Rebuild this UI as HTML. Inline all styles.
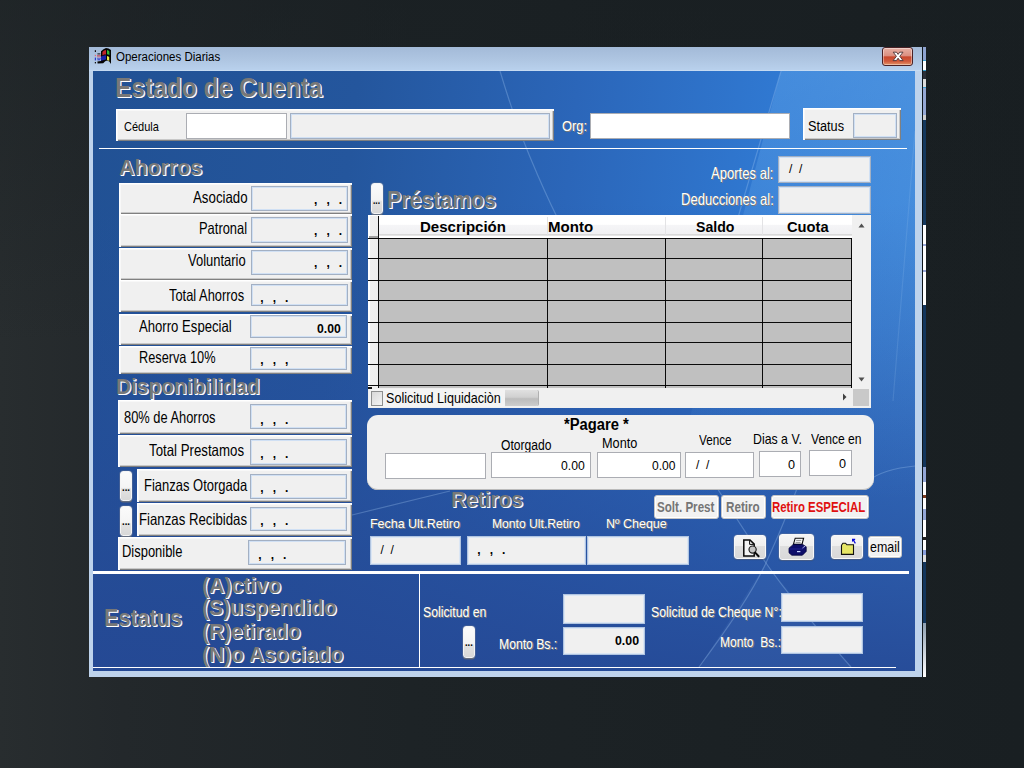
<!DOCTYPE html>
<html lang="es"><head><meta charset="utf-8"><title>Operaciones Diarias</title>
<style>
html,body{margin:0;padding:0}
body{width:1024px;height:768px;overflow:hidden;position:relative;font-family:"Liberation Sans",sans-serif;
 background:#1b2124;
 background-image:linear-gradient(180deg,rgba(24,30,33,.5) 0,rgba(24,30,33,0) 45%,rgba(30,36,38,.0) 100%),linear-gradient(90deg,#282d2f 0,#23282b 12%,#1d2326 40%,#191f22 100%);}
div,span,svg{position:absolute;box-sizing:border-box}
.win{background:#bed3ec;}
.tbar{background:linear-gradient(#a3bad8 0%,#aec5e1 50%,#b8d0ec 94%,#cde0f4 100%);}
.app{background:#2a5dab;overflow:hidden;
 background-image:linear-gradient(180deg,rgba(39,80,160,0) 0%,rgba(39,80,160,0) 22%,rgba(38,76,154,.5) 60%,rgba(37,72,148,.92) 100%),
 linear-gradient(96deg,#215194 0%,#24569d 30%,#2b66b9 55%,#3079d2 78%,#3c85d8 100%);}
.t{white-space:pre;color:#000;display:inline-block}
.c{white-space:pre;color:#000;font-weight:bold}
.pnl{background:#f0f0f0;box-shadow:inset 1px 1px 0 #fff,inset 2px 2px 0 #f8f8f8,inset -1px -1px 0 #808080,inset -2px -2px 0 #c8c8c8}
.fld{background:#f0f0f0;border:1px solid #a3b0c3;box-shadow:inset 0 0 0 1px #d0e0f4}
.fld2{background:#f0f0f0;border:1px solid #b0c4e0;box-shadow:inset 0 0 0 1px #dbe6f4}
.inp{background:#fff;border:1px solid #abadb3}
.hd{color:#787878;font-weight:bold;text-shadow:1px 1px 0 #fff,1.4px 1.4px 0 rgba(255,255,255,.6)}
.wl{color:#fff;text-shadow:1px 1px 0 #7a7a7a,1px 0 0 #7a7a7a}
.hl{background:#fff}
.btn{background:linear-gradient(#fbfbfb 0%,#f4f4f4 55%,#e2e2e2 60%,#d8d8d8 100%);border:1px solid #f4f4f4;border-radius:3px;box-shadow:0 0 0 .6px rgba(120,130,150,.6),0 1.5px 0 rgba(110,110,110,.75)}
.cmd{background:#f2f2f2;border:1px solid #c6c6c6;border-radius:3px;box-shadow:inset 0 0 0 1px #fff}
.dis{color:#757575;font-weight:bold}
.red{color:#e01010;font-weight:bold}
.b{font-weight:bold}
.ibtn{background:linear-gradient(#f5f5f5 0%,#efefef 44%,#dfdfdf 46%,#d9d9d9 100%);border:1px solid #f8f8f8;border-radius:3px;box-shadow:0 0 0 .6px rgba(120,130,150,.55),0 1px 1px rgba(60,70,90,.5)}

</style></head>
<body>
<div class="win" style="left:89px;top:47px;width:834px;height:630px;"></div>
<div class="tbar" style="left:89px;top:47px;width:834px;height:24px;"></div>
<div class="" style="left:922px;top:47px;width:1px;height:630px;background:#10161a"></div>
<div class="" style="left:923px;top:47px;width:3px;height:630px;background:linear-gradient(180deg,#8ea3d0 0.0px,#8ea3d0 12.8px,#3aa0d0 12.8px,#3aa0d0 13.8px,#ffffff 13.8px,#ffffff 23.2px,#3aa0d0 23.2px,#3aa0d0 24.2px,#2a2f38 24.2px,#2a2f38 31.5px,#dcdcdc 31.5px,#dcdcdc 39.9px,#3aa0d0 39.9px,#3aa0d0 41.0px,#95a8d4 41.0px,#95a8d4 68.0px,#cfcfcf 68.0px,#cfcfcf 73.2px,#14385e 73.2px,#14385e 178.0px,#ffffff 178.0px,#ffffff 197.0px,#9aa8d8 197.0px,#9aa8d8 199.0px,#ffffff 199.0px,#ffffff 223.0px,#9aa8d8 223.0px,#9aa8d8 225.0px,#ffffff 225.0px,#ffffff 258.2px,#12355c 258.2px,#12355c 420.3px,#93a6d6 420.3px,#93a6d6 434.9px,#ffffff 434.9px,#ffffff 448.5px,#7a3a20 448.5px,#7a3a20 451.0px,#ffffff 451.0px,#ffffff 462.0px,#93a6d6 462.0px,#93a6d6 473.0px,#ffffff 473.0px,#ffffff 490.0px,#202020 490.0px,#202020 493.0px,#ffffff 493.0px,#ffffff 503.0px,#8aa0dc 503.0px,#8aa0dc 508.0px,#e0e0e0 508.0px,#e0e0e0 515.0px,#12355c 515.0px,#12355c 576.0px,#8fa0b2 576px,#ffffff 630px)"></div>
<div class="app" style="left:93px;top:71px;width:822px;height:600px"><svg width="822" height="600" viewBox="0 0 822 600" style="left:0;top:0"><defs><linearGradient id="wg" x1="0" y1="0" x2="0" y2="1"><stop offset="0" stop-color="#62a6ea" stop-opacity=".42"/><stop offset=".45" stop-color="#62a6ea" stop-opacity=".22"/><stop offset="1" stop-color="#62a6ea" stop-opacity="0"/></linearGradient></defs><path d="M688 0 L822 0 L822 430 L575 430 Z" fill="url(#wg)"/><path d="M673 492 Q640 545 606 596 L758 596 Q715 545 673 492Z" fill="#6ea0e0" fill-opacity=".10"/><g fill="none" stroke="#a8ccf4" stroke-opacity=".3" stroke-width="1.2"><path d="M688 0 L600 300"/><path d="M407 0 Q422 50 437 86 T464 146"/><path d="M180 458 Q230 452 259 444 L357 420"/><path d="M706 412 L702.7 421 Q690 455 673 492 T606 596"/><path d="M621 412 L626.6 421 Q650 458 673 492 T758 596"/><path d="M822 395 Q790 398 775 410"/><path d="M822 60 Q812 180 800 330" stroke-opacity=".16"/></g></svg></div>
<svg style="left:94px;top:48px" width="17" height="16" viewBox="0 0 17 16"><path d="M7 3.2 L9.5 1.2 L12 0 L14.5 .6 L17 2 V16 L15.3 13.6 L13.2 12.6 L11.2 13.2 L9.2 15.2 L3.6 15.6 L3.4 13.6 L7 13 Z" fill="#050505"/><path d="M8.4 4 L10 2.6 L12 2 L12 6.4 L10 6.6 L8.4 7.4Z" fill="#c4232a"/><path d="M13 2 L14.4 2.6 L15.4 3.4 L15.4 7.2 L14.4 6.4 L13 6.2Z" fill="#2fb43a"/><path d="M7 8.4 L8.6 8 L10 7.4 L12 7.2 L12 11.6 L10 12 L8 12.6 L7 12.8Z" fill="#1a22a8"/><path d="M13 8 L14.4 8.4 L15.2 9 L15.2 13.2 L14.4 12.4 L13 12Z" fill="#ece84a"/><rect x=".8" y="2.2" width="1.2" height="1.8" fill="#111"/><rect x=".8" y="6.8" width="1.2" height="1.4" fill="#e06a78"/><rect x=".8" y="9.6" width="1.2" height="2.8" fill="#2a3ad0"/><rect x=".8" y="14" width="1.2" height="1.4" fill="#111"/><rect x="3.4" y="5.4" width="3" height="1" fill="#111"/><path d="M3.4 7.5h1.2M5.4 7.5h1.2M3.4 8.8h1.2M5.4 8.8h1.2" stroke="#d02a3a" stroke-width="1"/><path d="M3.4 10.4h1.2M5.4 10.4h1.2M3.4 11.8h3" stroke="#2030c8" stroke-width="1"/></svg>
<span class="t " style="left:116.00px;transform-origin:0 0;top:51.12px;font-size:12.5px;line-height:12.5px;transform:scaleX(0.9204)">Operaciones Diarias</span>
<div style="left:882px;top:47px;width:31px;height:19px;border:1px solid #4a2226;border-radius:3px;background:linear-gradient(#e7b0a4 0%,#dc8f80 46%,#c9482e 52%,#d05a3c 78%,#e39468 100%);box-shadow:inset 0 0 0 1px rgba(255,255,255,.4)"><svg width="30" height="17" viewBox="0 0 30 17" style="left:-.5px;top:0"><path d="M10.2 4.2h3.3l1.6 2.2 1.6-2.2h3.3l-3.2 4.1 3.3 4.3h-3.3l-1.7-2.4-1.7 2.4h-3.3l3.3-4.3z" fill="#fff" stroke="#4a3236" stroke-width=".9"/></svg></div>
<span class="t hd" style="left:114.92px;transform-origin:0 0;top:73.80px;font-size:28px;line-height:28px;transform:scaleX(0.8762)">Estado de Cuenta</span>
<div class="pnl" style="left:116px;top:109px;width:438px;height:32px;"></div>
<span class="t " style="left:124.00px;transform-origin:0 0;top:120.30px;font-size:13px;line-height:13px;transform:scaleX(0.8459)">Cédula</span>
<div class="inp" style="left:186px;top:113px;width:101px;height:26px;"></div>
<div class="fld" style="left:290px;top:113px;width:260px;height:26px;"></div>
<span class="t wl" style="left:562.00px;transform-origin:0 0;top:118.30px;font-size:15px;line-height:15px;transform:scaleX(0.8570)">Org:</span>
<div class="inp" style="left:590px;top:113px;width:200px;height:26px;"></div>
<div class="pnl" style="left:802.5px;top:108px;width:98.5px;height:32px;"></div>
<span class="t " style="left:808.00px;transform-origin:0 0;top:119.15px;font-size:14px;line-height:14px;transform:scaleX(0.9070)">Status</span>
<div class="fld" style="left:853px;top:112.5px;width:44px;height:25.0px;"></div>
<div class="hl" style="left:99px;top:148px;width:808px;height:1px;"></div>
<span class="t hd" style="left:119.30px;transform-origin:0 0;top:157.25px;font-size:22.5px;line-height:22.5px;transform:scaleX(0.9507)">Ahorros</span>
<div class="pnl" style="left:119px;top:183px;width:233px;height:31px;"></div>
<span class="t " style="left:193.00px;transform-origin:0 0;top:189.33px;font-size:16.5px;line-height:16.5px;transform:scaleX(0.8050)">Asociado</span>
<div class="fld" style="left:251px;top:186px;width:97px;height:25px;"></div>
<span class="c" style="left:314.08px;top:194.34px;font-size:12px;line-height:12px;word-spacing:5.73px">, , .</span>
<div class="pnl" style="left:119px;top:214px;width:233px;height:33px;"></div>
<span class="t " style="left:198.72px;transform-origin:0 0;top:219.83px;font-size:16.5px;line-height:16.5px;transform:scaleX(0.7827)">Patronal</span>
<div class="fld" style="left:251px;top:217px;width:97px;height:26px;"></div>
<span class="c" style="left:314.08px;top:224.84px;font-size:12px;line-height:12px;word-spacing:5.73px">, , .</span>
<div class="pnl" style="left:119px;top:248px;width:233px;height:32px;"></div>
<span class="t " style="left:188.00px;transform-origin:0 0;top:252.03px;font-size:16.5px;line-height:16.5px;transform:scaleX(0.7854)">Voluntario</span>
<div class="fld" style="left:251px;top:250px;width:97px;height:25px;"></div>
<span class="c" style="left:314.08px;top:257.04px;font-size:12px;line-height:12px;word-spacing:5.73px">, , .</span>
<div class="pnl" style="left:119px;top:280px;width:233px;height:32px;"></div>
<span class="t " style="left:168.80px;transform-origin:0 0;top:286.83px;font-size:16.5px;line-height:16.5px;transform:scaleX(0.7807)">Total Ahorros</span>
<div class="fld" style="left:251px;top:284px;width:97px;height:22px;"></div>
<span class="c" style="left:260.28px;top:291.84px;font-size:12px;line-height:12px;word-spacing:5.73px">, , .</span>
<div class="pnl" style="left:119px;top:314px;width:233px;height:31px;"></div>
<span class="t " style="left:138.80px;transform-origin:0 0;top:318.03px;font-size:16.5px;line-height:16.5px;transform:scaleX(0.7961)">Ahorro Especial</span>
<div class="fld" style="left:250px;top:315px;width:97px;height:23px;"></div>
<span class="t b" style="left:317.00px;transform-origin:0 0;top:321.50px;font-size:13px;line-height:13px;transform:scaleX(0.9373)">0.00</span>
<div class="pnl" style="left:119px;top:346px;width:233px;height:28px;"></div>
<span class="t " style="left:138.73px;transform-origin:0 0;top:348.53px;font-size:16.5px;line-height:16.5px;transform:scaleX(0.7725)">Reserva 10%</span>
<div class="fld" style="left:250px;top:347px;width:97px;height:23px;"></div>
<span class="c" style="left:260.28px;top:353.84px;font-size:12px;line-height:12px;word-spacing:5.73px">, , ,</span>
<span class="t hd" style="left:116.08px;transform-origin:0 0;top:374.58px;font-size:22.7px;line-height:22.7px;transform:scaleX(0.9195)">Disponibilidad</span>
<div class="pnl" style="left:118px;top:400px;width:234px;height:34px;"></div>
<span class="t " style="left:124.00px;transform-origin:0 0;top:408.53px;font-size:16.5px;line-height:16.5px;transform:scaleX(0.7792)">80% de Ahorros</span>
<div class="fld" style="left:250px;top:404px;width:97px;height:25px;"></div>
<span class="c" style="left:260.28px;top:413.84px;font-size:12px;line-height:12px;word-spacing:5.73px">, , .</span>
<div class="pnl" style="left:118px;top:435px;width:234px;height:32px;"></div>
<span class="t " style="left:149.00px;transform-origin:0 0;top:442.03px;font-size:16.5px;line-height:16.5px;transform:scaleX(0.8031)">Total Prestamos</span>
<div class="fld" style="left:250px;top:439px;width:97px;height:26px;"></div>
<span class="c" style="left:260.28px;top:447.84px;font-size:12px;line-height:12px;word-spacing:5.73px">, , .</span>
<div class="pnl" style="left:137px;top:469px;width:215px;height:33px;"></div>
<div class="btn" style="left:119.5px;top:470.5px;width:12.5px;height:30.5px;"></div>
<span class="t b" style="left:121.50px;transform-origin:0 0;top:482.19px;font-size:11px;line-height:11px;transform:scaleX(0.8779)">...</span>
<span class="t " style="left:143.71px;transform-origin:0 0;top:477.03px;font-size:16.5px;line-height:16.5px;transform:scaleX(0.7864)">Fianzas Otorgada</span>
<div class="fld" style="left:250px;top:474px;width:97px;height:25px;"></div>
<span class="c" style="left:260.28px;top:482.34px;font-size:12px;line-height:12px;word-spacing:5.73px">, , .</span>
<div class="pnl" style="left:137px;top:503px;width:215px;height:33px;"></div>
<div class="btn" style="left:119.5px;top:505.5px;width:12.5px;height:30px;"></div>
<span class="t b" style="left:121.50px;transform-origin:0 0;top:516.19px;font-size:11px;line-height:11px;transform:scaleX(0.8779)">...</span>
<span class="t " style="left:139.20px;transform-origin:0 0;top:510.53px;font-size:16.5px;line-height:16.5px;transform:scaleX(0.8011)">Fianzas Recibidas</span>
<div class="fld" style="left:250px;top:507px;width:97px;height:24px;"></div>
<span class="c" style="left:260.28px;top:515.34px;font-size:12px;line-height:12px;word-spacing:5.73px">, , .</span>
<div class="pnl" style="left:118px;top:537px;width:234px;height:33px;"></div>
<span class="t " style="left:122.22px;transform-origin:0 0;top:543.03px;font-size:16.5px;line-height:16.5px;transform:scaleX(0.7842)">Disponible</span>
<div class="fld" style="left:248px;top:540px;width:98px;height:25px;"></div>
<span class="c" style="left:258.28px;top:548.84px;font-size:12px;line-height:12px;word-spacing:5.73px">, , .</span>
<span class="t wl" style="left:711.00px;transform-origin:0 0;top:164.53px;font-size:16.5px;line-height:16.5px;transform:scaleX(0.7919)">Aportes al:</span>
<div class="fld" style="left:778px;top:156px;width:93px;height:27px;"></div>
<span class="t " style="left:789.00px;transform-origin:0 0;top:163.34px;font-size:12px;line-height:12px;transform:scaleX(1.0000)">/  /</span>
<span class="t wl" style="left:680.71px;transform-origin:0 0;top:191.03px;font-size:16.5px;line-height:16.5px;transform:scaleX(0.7900)">Deducciones al:</span>
<div class="fld" style="left:778px;top:186px;width:93px;height:28px;"></div>
<div class="btn" style="left:370.5px;top:183px;width:12px;height:31px;"></div>
<span class="t b" style="left:372.50px;transform-origin:0 0;top:195.19px;font-size:11px;line-height:11px;transform:scaleX(0.7682)">...</span>
<span class="t hd" style="left:386.70px;transform-origin:0 0;top:189.44px;font-size:23.7px;line-height:23.7px;transform:scaleX(0.8995)">Préstamos</span>
<div style="left:368px;top:215px;width:503px;height:193px;background:#f0f0f0"><div style="left:0px;top:0px;width:484px;height:1px;background:#fff;"></div><div style="left:11px;top:1px;width:473px;height:22px;background:linear-gradient(#fff 0%,#fff 38%,#f5f5f7 42%,#f0f0f2 82%,#d9d9d9 84%,#d9d9d9 88%,#fff 90%,#fff 100%);"></div><div style="left:0px;top:1px;width:11px;height:172px;background:linear-gradient(90deg,#fff 0,#fff 1.5px,#f0f0f0 2px,#eee 100%);"></div><div style="left:1px;top:20.5px;width:9px;height:2px;background:#a0a0a0;"></div><div style="left:11px;top:24px;width:473px;height:149px;background:#c0c0c0;"></div><div style="left:0px;top:23px;width:484px;height:1px;background:#000;opacity:.95"></div><div style="left:0px;top:43px;width:484px;height:1px;background:#000;opacity:.95"></div><div style="left:0px;top:65px;width:484px;height:1px;background:#000;opacity:.95"></div><div style="left:0px;top:85px;width:484px;height:1px;background:#000;opacity:.95"></div><div style="left:0px;top:107px;width:484px;height:1px;background:#000;opacity:.95"></div><div style="left:0px;top:127px;width:484px;height:1px;background:#000;opacity:.95"></div><div style="left:0px;top:149px;width:484px;height:1px;background:#000;opacity:.95"></div><div style="left:0px;top:170px;width:484px;height:1px;background:#000;opacity:.95"></div><div style="left:10px;top:1px;width:1px;height:172px;background:#000;opacity:.95"></div><div style="left:179px;top:23px;width:1px;height:150px;background:#000;opacity:.95"></div><div style="left:297px;top:23px;width:1px;height:150px;background:#000;opacity:.95"></div><div style="left:394px;top:23px;width:1px;height:150px;background:#000;opacity:.95"></div><div style="left:483px;top:23px;width:1px;height:150px;background:#000;opacity:.95"></div><div style="left:179px;top:2px;width:1px;height:19px;background:#e3e3e5;"></div><div style="left:297px;top:2px;width:1px;height:19px;background:#e3e3e5;"></div><div style="left:394px;top:2px;width:1px;height:19px;background:#e3e3e5;"></div><div style="left:0px;top:172px;width:4px;height:2px;background:#111;"></div><svg style="left:490px;top:8px" width="7" height="5" viewBox="0 0 7 5"><path d="M3.5 .5L6.5 4.5H.5z" fill="#505050"/></svg><svg style="left:490px;top:162px" width="7" height="5" viewBox="0 0 7 5"><path d="M.5 .5h6L3.5 4.5z" fill="#505050"/></svg><svg style="left:474px;top:178px" width="5" height="8" viewBox="0 0 5 8"><path d="M1 .5L4.5 4L1 7.5z" fill="#404040"/></svg><div style="left:485px;top:174px;width:15.5px;height:17px;background:#c9c9c9;"></div><div style="left:136.5px;top:175px;width:33px;height:16px;background:linear-gradient(#e0e0e0 0%,#d0d0d0 45%,#bcbcbc 55%,#cdcdcd 100%);border-radius:0 2px 2px 0;box-shadow:1px 0 0 #b0b0b0"></div><div style="left:1px;top:174px;width:136px;height:18px;background:#f4f4f4;"></div><div style="left:2.5px;top:176px;width:12px;height:15px;background:linear-gradient(135deg,#d8d8d8,#f4f4f4);border:1px solid #8e8f8f"></div></div>
<span class="t b" style="left:420.03px;transform-origin:0 0;top:218.88px;font-size:15.5px;line-height:15.5px;transform:scaleX(0.9684)">Descripción</span>
<span class="t b" style="left:547.83px;transform-origin:0 0;top:218.88px;font-size:15.5px;line-height:15.5px;transform:scaleX(0.9709)">Monto</span>
<span class="t b" style="left:695.50px;transform-origin:0 0;top:218.88px;font-size:15.5px;line-height:15.5px;transform:scaleX(0.9105)">Saldo</span>
<span class="t b" style="left:786.50px;transform-origin:0 0;top:218.88px;font-size:15.5px;line-height:15.5px;transform:scaleX(0.9483)">Cuota</span>
<span class="t " style="left:386.00px;transform-origin:0 0;top:389.80px;font-size:15px;line-height:15px;transform:scaleX(0.8393)">Solicitud Liquidaciòn</span>
<div class="" style="left:367px;top:414.5px;width:507px;height:75.5px;background:#f0f0f0;border-radius:11px;box-shadow:inset 0 -1px 0 #bbb"></div>
<span class="t b" style="left:563.50px;transform-origin:0 0;top:416.96px;font-size:16px;line-height:16px;transform:scaleX(0.9220)">*Pagare *</span>
<span class="t " style="left:500.50px;transform-origin:0 0;top:436.88px;font-size:15.5px;line-height:15.5px;transform:scaleX(0.7812)">Otorgado</span>
<span class="t " style="left:602.18px;transform-origin:0 0;top:435.38px;font-size:15.5px;line-height:15.5px;transform:scaleX(0.8201)">Monto</span>
<span class="t " style="left:699.00px;transform-origin:0 0;top:433.03px;font-size:14.5px;line-height:14.5px;transform:scaleX(0.8075)">Vence</span>
<span class="t " style="left:753.45px;transform-origin:0 0;top:431.53px;font-size:14.5px;line-height:14.5px;transform:scaleX(0.8509)">Dias a V.</span>
<span class="t " style="left:811.00px;transform-origin:0 0;top:431.53px;font-size:14.5px;line-height:14.5px;transform:scaleX(0.8360)">Vence en</span>
<div class="inp" style="left:385px;top:453px;width:101px;height:26px;"></div>
<div class="inp" style="left:491px;top:452px;width:100px;height:26px;"></div>
<span class="t " style="left:561.00px;transform-origin:0 0;top:459.00px;font-size:13px;line-height:13px;transform:scaleX(0.9373)">0.00</span>
<div class="inp" style="left:597px;top:452px;width:84px;height:26px;"></div>
<span class="t " style="left:651.50px;transform-origin:0 0;top:459.00px;font-size:13px;line-height:13px;transform:scaleX(0.9293)">0.00</span>
<div class="inp" style="left:685px;top:452px;width:69px;height:26px;"></div>
<span class="t " style="left:696.00px;transform-origin:0 0;top:459.34px;font-size:12px;line-height:12px;transform:scaleX(1.0000)">/  /</span>
<div class="inp" style="left:759px;top:451px;width:42px;height:26px;"></div>
<span class="t " style="left:788.00px;transform-origin:0 0;top:458.00px;font-size:13px;line-height:13px;transform:scaleX(0.9714)">0</span>
<div class="inp" style="left:809px;top:450px;width:43px;height:26px;"></div>
<span class="t " style="left:838.50px;transform-origin:0 0;top:457.00px;font-size:13px;line-height:13px;transform:scaleX(0.9714)">0</span>
<span class="t hd" style="left:451.05px;transform-origin:0 0;top:489.38px;font-size:22px;line-height:22px;transform:scaleX(0.9496)">Retiros</span>
<div class="cmd" style="left:653.5px;top:495px;width:65px;height:23.5px;"></div>
<span class="t dis" style="left:657.30px;transform-origin:0 0;top:499.65px;font-size:14px;line-height:14px;transform:scaleX(0.8293)">Solt. Prest</span>
<div class="cmd" style="left:720.5px;top:495px;width:45px;height:23.5px;"></div>
<span class="t dis" style="left:725.50px;transform-origin:0 0;top:499.65px;font-size:14px;line-height:14px;transform:scaleX(0.8347)">Retiro</span>
<div class="cmd" style="left:770.5px;top:495px;width:98px;height:23.5px;"></div>
<span class="t red" style="left:772.00px;transform-origin:0 0;top:499.65px;font-size:14px;line-height:14px;transform:scaleX(0.8145)">Retiro ESPECIAL</span>
<span class="t wl" style="left:370.08px;transform-origin:0 0;top:517.27px;font-size:13.5px;line-height:13.5px;transform:scaleX(0.9216)">Fecha Ult.Retiro</span>
<span class="t wl" style="left:491.60px;transform-origin:0 0;top:517.27px;font-size:13.5px;line-height:13.5px;transform:scaleX(0.8987)">Monto Ult.Retiro</span>
<span class="t wl" style="left:605.78px;transform-origin:0 0;top:517.27px;font-size:13.5px;line-height:13.5px;transform:scaleX(0.9235)">Nº Cheque</span>
<div class="fld2" style="left:370px;top:536px;width:91px;height:29px;"></div>
<span class="t " style="left:380.50px;transform-origin:0 0;top:543.84px;font-size:12px;line-height:12px;transform:scaleX(1.0000)">/  /</span>
<div class="fld2" style="left:467px;top:536px;width:119px;height:29px;"></div>
<span class="c" style="left:477.28px;top:544.34px;font-size:12px;line-height:12px;word-spacing:5.73px">, , .</span>
<div class="fld2" style="left:587px;top:536px;width:102px;height:29px;"></div>
<div class="ibtn" style="left:734px;top:535px;width:32px;height:24px;"><svg width="32" height="24" viewBox="0 0 32 24" style="left:0;top:0"><path d="M8.8 3.9h6.2l4.2 4.2v12h-10.4z" fill="#f4f4f4" stroke="#0a0a0a" stroke-width="1.5"/><path d="M14.6 4.2v4.2h4.2" fill="none" stroke="#0a0a0a" stroke-width="1"/><circle cx="17.6" cy="13.6" r="3.6" fill="#c4c4c4" stroke="#222" stroke-width="1.2"/><path d="M20.2 16.6l3.4 3.6" stroke="#0a0a0a" stroke-width="2" stroke-linecap="round"/></svg></div>
<div class="ibtn" style="left:779px;top:534px;width:35px;height:26px;"><svg width="35" height="26" viewBox="0 0 35 26" style="left:0;top:0"><path d="M15.2 3.2h8.4l-1.6 6.2h-8.6z" fill="#fafafa" stroke="#0a0a0a" stroke-width="1.1"/><path d="M16.2 5.4h5M15.6 7.4h5" stroke="#777" stroke-width=".8"/><path d="M9 13.2l4.4-3.8h9.2l3.6 2.4v4.6l-3.8 3.8h-10.6l-2.8-2.4z" fill="#0e0e6a" stroke="#05053a" stroke-width=".8"/><path d="M22.4 13.2l3.2-2.6" stroke="#c8d0f4" stroke-width="1"/><path d="M9.4 14h13l3-2.4" fill="none" stroke="#2a2a9a" stroke-width=".8"/><rect x="17" y="16" width="3.4" height="1.2" fill="#c8d4ff"/></svg></div>
<div class="ibtn" style="left:831px;top:535px;width:32px;height:24px;"><svg width="32" height="24" viewBox="0 0 32 24" style="left:0;top:0"><path d="M9.5 9.2l1.4-2h2.6l1.4 1.6h6.6v9.6h-12z" fill="#e6e666" stroke="#111" stroke-width="1.1"/><path d="M20 2.8h3.2v.9l-.9.7 1.6 2.6-1 .7-1.7-2.6-1.2.9z" fill="#0808d8"/></svg></div>
<div class="cmd" style="left:868px;top:536px;width:34px;height:22px;"></div>
<span class="t " style="left:869.80px;transform-origin:0 0;top:540.13px;font-size:14.5px;line-height:14.5px;transform:scaleX(0.8568)">email</span>
<div class="hl" style="left:93px;top:571px;width:816px;height:3px;"></div>
<div class="hl" style="left:93px;top:667px;width:803px;height:1px;"></div>
<div class="hl" style="left:419px;top:574px;width:1px;height:93px;"></div>
<span class="t hd" style="left:104.12px;transform-origin:0 0;top:605.56px;font-size:24.5px;line-height:24.5px;transform:scaleX(0.8806)">Estatus</span>
<span class="t hd" style="left:201.83px;transform-origin:0 0;top:575.18px;font-size:22px;line-height:22px;transform:scaleX(0.9658)">(A)ctivo</span>
<span class="t hd" style="left:201.84px;transform-origin:0 0;top:597.38px;font-size:22px;line-height:22px;transform:scaleX(0.9576)">(S)uspendido</span>
<span class="t hd" style="left:201.85px;transform-origin:0 0;top:621.38px;font-size:22px;line-height:22px;transform:scaleX(0.9488)">(R)etirado</span>
<span class="t hd" style="left:201.85px;transform-origin:0 0;top:644.38px;font-size:22px;line-height:22px;transform:scaleX(0.9528)">(N)o Asociado</span>
<span class="t wl" style="left:423.30px;transform-origin:0 0;top:603.50px;font-size:15px;line-height:15px;transform:scaleX(0.8160)">Solicitud en</span>
<div class="fld2" style="left:563px;top:594px;width:82px;height:30px;"></div>
<div class="fld2" style="left:563px;top:627px;width:82px;height:28px;"></div>
<span class="t b" style="left:615.00px;transform-origin:0 0;top:634.00px;font-size:13px;line-height:13px;transform:scaleX(0.9493)">0.00</span>
<div class="btn" style="left:462.5px;top:626px;width:12.2px;height:31.5px;"></div>
<span class="t b" style="left:464.70px;transform-origin:0 0;top:636.99px;font-size:11px;line-height:11px;transform:scaleX(0.8450)">...</span>
<span class="t wl" style="left:499.16px;transform-origin:0 0;top:637.13px;font-size:14.5px;line-height:14.5px;transform:scaleX(0.8398)">Monto Bs.:</span>
<span class="t wl" style="left:651.10px;transform-origin:0 0;top:603.70px;font-size:15px;line-height:15px;transform:scaleX(0.8208)">Solicitud de Cheque N°:</span>
<div class="fld2" style="left:781px;top:593px;width:82px;height:29px;"></div>
<span class="t wl" style="left:719.57px;transform-origin:0 0;top:635.13px;font-size:14.5px;line-height:14.5px;transform:scaleX(0.8316)">Monto  Bs.:</span>
<div class="fld2" style="left:781px;top:626px;width:82px;height:28px;"></div>
</body></html>
